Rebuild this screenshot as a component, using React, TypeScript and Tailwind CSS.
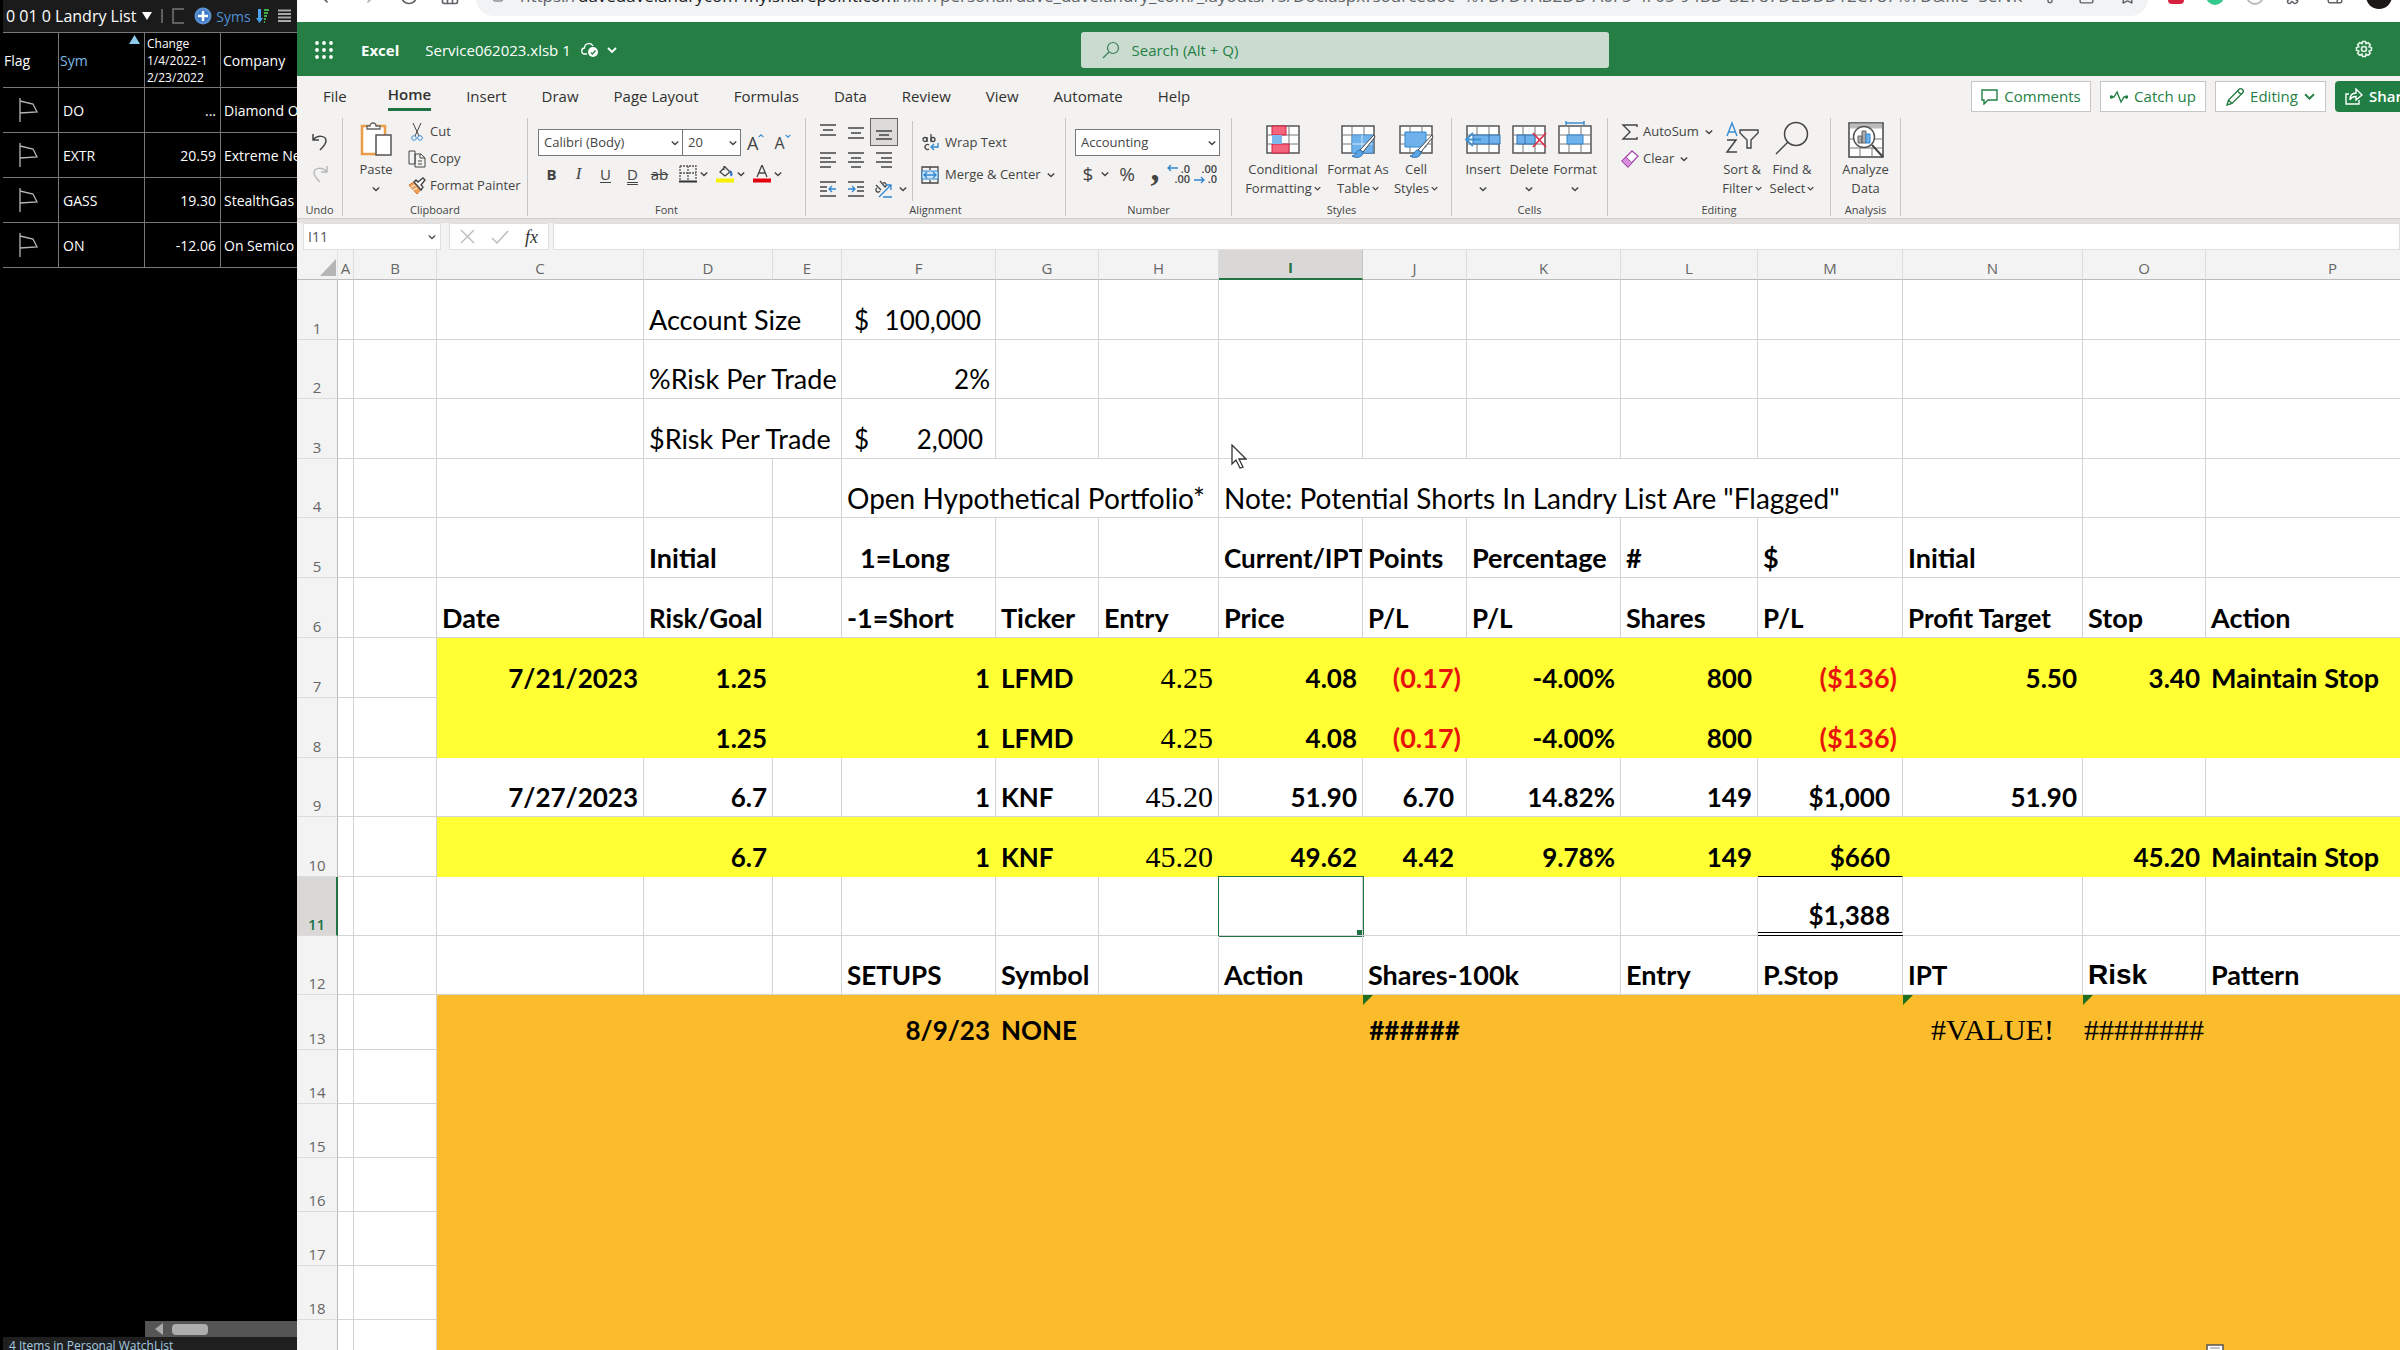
import type { ReactNode } from "react";
import { ArrowLeft, ArrowRight, House, Lock, RotateCw, Share2, Square, Star, PanelRight, Puzzle } from "lucide-react";

type Cell = { col: string; text: string; span?: number; cls?: string; mark?: boolean };
type Row = { n: number; h: string; fill?: "yellow" | "orange"; cells: Cell[] };

const columns = [
    { id: "A", w: "w-[16px]" },
    { id: "B", w: "w-[83px]" },
    { id: "C", w: "w-[207px]" },
    { id: "D", w: "w-[129px]" },
    { id: "E", w: "w-[69px]" },
    { id: "F", w: "w-[154px]" },
    { id: "G", w: "w-[103px]" },
    { id: "H", w: "w-[120px]" },
    { id: "I", w: "w-[144px]" },
    { id: "J", w: "w-[104px]" },
    { id: "K", w: "w-[154px]" },
    { id: "L", w: "w-[137px]" },
    { id: "M", w: "w-[145px]" },
    { id: "N", w: "w-[180px]" },
    { id: "O", w: "w-[123px]" },
    { id: "P", w: "w-[254px]" },
];

const TXT = "text-[27px]";
const NOTE = "text-[28px]";
const B = "font-bold text-[27px]";
const CAPS = "font-bold";
const R = "font-bold text-right";
const ACC = "font-bold text-right pr-[12px]";
const RED = "font-bold text-right text-[27px] text-[#e8140c]";
const SERIF = "text-right font-['Liberation_Serif',serif] text-[30px]";

const rows: Row[] = [
    { n: 1, h: "h-[60px]", cells: [{ col: "D", text: "Account Size", span: 2, cls: TXT }, { col: "F", text: "$|100,000", cls: "pl-[12px] pr-[14px]" }] },
    { n: 2, h: "h-[59px]", cells: [{ col: "D", text: "%Risk Per Trade", span: 2, cls: TXT }, { col: "F", text: "2%", cls: "text-right" }] },
    { n: 3, h: "h-[60px]", cells: [{ col: "D", text: "$Risk Per Trade", span: 2, cls: TXT }, { col: "F", text: "$|2,000", cls: "pl-[12px] pr-[12px]" }] },
    {
        n: 4, h: "h-[59px]",
        cells: [
            { col: "F", text: "Open Hypothetical Portfolio*", span: 3, cls: NOTE },
            { col: "I", text: 'Note: Potential Shorts In Landry List Are "Flagged"', span: 5, cls: NOTE },
        ],
    },
    {
        n: 5, h: "h-[60px]",
        cells: [
            { col: "D", text: "Initial", cls: B },
            { col: "F", text: "1=Long", cls: "font-bold text-[27px] pl-[18px]" },
            { col: "I", text: "Current/IPT", cls: CAPS },
            { col: "J", text: "Points", cls: B },
            { col: "K", text: "Percentage", cls: B },
            { col: "L", text: "#", cls: B },
            { col: "M", text: "$", cls: B },
            { col: "N", text: "Initial", cls: B },
        ],
    },
    {
        n: 6, h: "h-[60px]",
        cells: [
            { col: "C", text: "Date", cls: B },
            { col: "D", text: "Risk/Goal", cls: CAPS },
            { col: "F", text: "-1=Short", cls: B },
            { col: "G", text: "Ticker", cls: B },
            { col: "H", text: "Entry", cls: B },
            { col: "I", text: "Price", cls: B },
            { col: "J", text: "P/L", cls: CAPS },
            { col: "K", text: "P/L", cls: CAPS },
            { col: "L", text: "Shares", cls: B },
            { col: "M", text: "P/L", cls: CAPS },
            { col: "N", text: "Profit Target", cls: CAPS },
            { col: "O", text: "Stop", cls: B },
            { col: "P", text: "Action", cls: B },
        ],
    },
    {
        n: 7, h: "h-[60px]", fill: "yellow",
        cells: [
            { col: "C", text: "7/21/2023", cls: R },
            { col: "D", text: "1.25", cls: R },
            { col: "F", text: "1", cls: R },
            { col: "G", text: "LFMD", cls: CAPS },
            { col: "H", text: "4.25", cls: SERIF },
            { col: "I", text: "4.08", cls: R },
            { col: "J", text: "(0.17)", cls: RED },
            { col: "K", text: "-4.00%", cls: R },
            { col: "L", text: "800", cls: R },
            { col: "M", text: "($136)", cls: RED },
            { col: "N", text: "5.50", cls: R },
            { col: "O", text: "3.40", cls: R },
            { col: "P", text: "Maintain Stop", cls: B },
        ],
    },
    {
        n: 8, h: "h-[60px]", fill: "yellow",
        cells: [
            { col: "D", text: "1.25", cls: R },
            { col: "F", text: "1", cls: R },
            { col: "G", text: "LFMD", cls: CAPS },
            { col: "H", text: "4.25", cls: SERIF },
            { col: "I", text: "4.08", cls: R },
            { col: "J", text: "(0.17)", cls: RED },
            { col: "K", text: "-4.00%", cls: R },
            { col: "L", text: "800", cls: R },
            { col: "M", text: "($136)", cls: RED },
        ],
    },
    {
        n: 9, h: "h-[59px]",
        cells: [
            { col: "C", text: "7/27/2023", cls: R },
            { col: "D", text: "6.7", cls: R },
            { col: "F", text: "1", cls: R },
            { col: "G", text: "KNF", cls: CAPS },
            { col: "H", text: "45.20", cls: SERIF },
            { col: "I", text: "51.90", cls: R },
            { col: "J", text: "6.70", cls: ACC },
            { col: "K", text: "14.82%", cls: R },
            { col: "L", text: "149", cls: R },
            { col: "M", text: "$1,000", cls: ACC },
            { col: "N", text: "51.90", cls: R },
        ],
    },
    {
        n: 10, h: "h-[60px]", fill: "yellow",
        cells: [
            { col: "D", text: "6.7", cls: R },
            { col: "F", text: "1", cls: R },
            { col: "G", text: "KNF", cls: CAPS },
            { col: "H", text: "45.20", cls: SERIF },
            { col: "I", text: "49.62", cls: R },
            { col: "J", text: "4.42", cls: ACC },
            { col: "K", text: "9.78%", cls: R },
            { col: "L", text: "149", cls: R },
            { col: "M", text: "$660", cls: "font-bold text-right pr-[12px] border-b-black" },
            { col: "O", text: "45.20", cls: R },
            { col: "P", text: "Maintain Stop", cls: B },
        ],
    },
    {
        n: 11, h: "h-[59px]",
        cells: [{ col: "M", text: "$1,388", cls: "font-bold text-right pr-[12px] pb-px border-b-4 border-b-black [border-bottom-style:double]" }],
    },
    {
        n: 12, h: "h-[59px]",
        cells: [
            { col: "F", text: "SETUPS", cls: CAPS },
            { col: "G", text: "Symbol", cls: B },
            { col: "I", text: "Action", cls: B },
            { col: "J", text: "Shares-100k", span: 2, cls: B },
            { col: "L", text: "Entry", cls: B },
            { col: "M", text: "P.Stop", cls: B },
            { col: "N", text: "IPT", cls: CAPS },
            { col: "O", text: "Risk", cls: "font-bold font-['Liberation_Sans',sans-serif] text-[28px]" },
            { col: "P", text: "Pattern", cls: B },
        ],
    },
    {
        n: 13, h: "h-[55px]", fill: "orange",
        cells: [
            { col: "F", text: "8/9/23", cls: R },
            { col: "G", text: "NONE", cls: CAPS },
            { col: "J", text: "######", cls: "font-bold text-center", mark: true },
            { col: "N", text: "#VALUE!", cls: "text-center font-['Liberation_Serif',serif] text-[30px]", mark: true },
            { col: "O", text: "########", cls: "px-px font-['Liberation_Serif',serif] text-[30px]", mark: true },
        ],
    },
    { n: 14, h: "h-[54px]", fill: "orange", cells: [] },
    { n: 15, h: "h-[54px]", fill: "orange", cells: [] },
    { n: 16, h: "h-[54px]", fill: "orange", cells: [] },
    { n: 17, h: "h-[54px]", fill: "orange", cells: [] },
    { n: 18, h: "h-[54px]", fill: "orange", cells: [] },
    { n: 19, h: "h-[54px]", fill: "orange", cells: [] },
];

const watchlist = [
    { sym: "DO", change: "...", company: "Diamond O" },
    { sym: "EXTR", change: "20.59", company: "Extreme Ne" },
    { sym: "GASS", change: "19.30", company: "StealthGas" },
    { sym: "ON", change: "-12.06", company: "On Semico" },
];

const tabs = ["Insert", "Draw", "Page Layout", "Formulas", "Data", "Review", "View", "Automate", "Help"];

export default function App() {
    return (
        <div className="flex h-screen overflow-hidden bg-black font-['Open_Sans','Noto_Sans',sans-serif]">
            <Watchlist />
            <main className="flex min-w-0 flex-1 flex-col overflow-hidden bg-white">
                <BrowserBar />
                <TitleBar />
                <Ribbon />
                <FormulaBar />
                <Sheet />
            </main>
        </div>
    );
}

function Watchlist() {
    return (
        <aside className="flex w-[297px] shrink-0 flex-col overflow-hidden bg-black pl-[3px] text-white">
            <div className="flex h-[32px] shrink-0 items-center bg-[#1b1b1b] pl-[3px]">
                <button className="flex items-center gap-1.5 whitespace-nowrap text-[16px]">
                    0 01 0 Landry List
                    <svg width="10" height="8" viewBox="0 0 10 8"><path d="M0 0h10L5 8z" fill="#fff" /></svg>
                </button>
                <svg className="ml-2 shrink-0" width="26" height="18" viewBox="0 0 26 18" fill="none" stroke="#777" strokeWidth="1.5">
                    <path d="M2 2v14M24 2H13v14h11" />
                </svg>
                <button className="ml-2 flex items-center gap-1 text-[14px] text-[#4f8fd6]">
                    <svg width="18" height="18" viewBox="0 0 18 18">
                        <circle cx="9" cy="9" r="8.5" fill="#5b8fd0" />
                        <circle cx="9" cy="9" r="6" fill="#3b78c8" />
                        <path d="M9 4v10M4 9h10" stroke="#fff" strokeWidth="2.5" />
                    </svg>
                    Syms
                </button>
                <svg className="ml-1 shrink-0" width="15" height="16" viewBox="0 0 15 16">
                    <path d="M3 1h3v9h2l-3.5 5L1 10h2z" fill="#4aa3f0" />
                    <path d="M9 2h5M9 5h4M9 8h3M9 11h2M9 14h1" stroke="#3fae49" strokeWidth="2" />
                </svg>
                <svg className="ml-2 shrink-0" width="13" height="14" viewBox="0 0 13 14">
                    <path d="M0 1.5h13M0 5h13M0 8.5h13M0 12h13" stroke="#aaa" strokeWidth="2" />
                </svg>
            </div>
            <table className="w-full shrink-0 table-fixed border-separate border-spacing-0 text-[14px]">
                <colgroup>
                    <col className="w-[56px]" />
                    <col className="w-[86px]" />
                    <col className="w-[76px]" />
                    <col />
                </colgroup>
                <thead>
                    <tr className="h-[56px] text-left">
                        <th className="border-y border-r border-[#777] pl-px font-normal">Flag</th>
                        <th className="relative border-y border-r border-[#777] pl-px font-normal text-[#7dbbe6]">
                            Sym
                            <svg className="absolute top-0.5 right-1" width="11" height="9" viewBox="0 0 11 9"><path d="M0 9L5.5 0 11 9z" fill="#8ccbec" /></svg>
                        </th>
                        <th className="border-y border-r border-[#777] pl-0.5 text-[12px] leading-[17px] font-normal">
                            Change<br />1/4/2022-1<br />2/23/2022
                        </th>
                        <th className="border-y border-[#777] pl-0.5 font-normal">Company</th>
                    </tr>
                </thead>
                <tbody>
                    {watchlist.map((item) => (
                        <tr key={item.sym} className="h-[45px] whitespace-nowrap">
                            <td className="border-r border-b border-[#777] pl-[15px]">
                                <svg width="22" height="26" viewBox="0 0 22 26" fill="none" stroke="#b5b5b5" strokeWidth="1.3">
                                    <path d="M2 1v24M2 4l13 3 4 8-17 1" />
                                </svg>
                            </td>
                            <td className="border-r border-b border-[#777] pl-1">{item.sym}</td>
                            <td className="border-r border-b border-[#777] pr-1 text-right">{item.change}</td>
                            <td className="overflow-hidden border-b border-[#777] pl-[3px]">{item.company}</td>
                        </tr>
                    ))}
                </tbody>
            </table>
            <div className="mt-auto ml-[142px] flex h-[16px] shrink-0 items-center bg-[#555] pl-[10px]">
                <svg width="8" height="12" viewBox="0 0 8 12"><path d="M8 0v12L0 6z" fill="#aaa" /></svg>
                <div className="ml-[9px] h-[11px] w-[36px] rounded-sm bg-[#adadad]" />
            </div>
            <div className="h-[13px] shrink-0 overflow-hidden bg-[#1f1f1f] pl-1.5 text-[12px] leading-[17px] text-[#a5cbe0]">
                4 Items in Personal WatchList
            </div>
        </aside>
    );
}

function BrowserBar() {
    return (
        <div className="flex h-[22px] shrink-0 items-end overflow-hidden bg-white pb-[6px] text-[#5f6368]">
            <div className="flex h-9 w-[179px] shrink-0 items-center gap-[21px] pb-1 pl-[20px]">
                <ArrowLeft size={20} />
                <ArrowRight size={20} className="text-[#b0b3b6]" />
                <RotateCw size={20} />
                <House size={20} />
            </div>
            <div className="flex h-9 min-w-0 flex-1 items-center gap-4 rounded-full bg-[#f1f3f4] pr-3 pb-1 pl-4">
                <Lock size={12} className="shrink-0" />
                <span className="min-w-0 flex-1 overflow-hidden text-[17px] leading-7 whitespace-nowrap">
                    https://<span className="text-[#202124]">davedavelandrycom-my.sharepoint.com</span>
                    /:x:/r/personal/dave_davelandry_com/_layouts/15/Doc.aspx?sourcedoc=%7B7D7AB2DD-A0F5-4F05-94BD-B2787DEDDD12C787%7D&amp;file=Service062023...
                </span>
                <div className="flex shrink-0 items-center gap-6">
                    <Share2 size={16} />
                    <Square size={17} />
                    <Star size={17} />
                </div>
            </div>
            <div className="flex h-9 w-[252px] shrink-0 items-center gap-[22px] pb-1 pl-[20px]">
                <span className="size-[16px] rounded-sm bg-[#d5213f]" />
                <span className="size-[18px] rounded-full bg-[#35c98e]" />
                <span className="size-[18px] rounded-full border-2 border-[#bbb]" />
                <Puzzle size={18} />
                <PanelRight size={18} />
                <span className="size-[26px] rounded-full bg-[#1c1818]" />
            </div>
        </div>
    );
}

function TitleBar() {
    return (
        <header className="flex h-[54px] shrink-0 items-center bg-[#257f45] pt-0.5 pr-2 text-[15px] text-white">
            <div className="flex flex-1 items-center pl-[18px]">
                <button aria-label="App launcher">
                    <svg width="18" height="18" viewBox="0 0 18 18" fill="#fff">
                        {[2, 9, 16].map((y) => [2, 9, 16].map((x) => <circle key={`${x}-${y}`} cx={x} cy={y} r="1.9" />))}
                    </svg>
                </button>
                <span className="ml-7 font-bold">Excel</span>
                <button className="ml-[26px] flex items-center">
                    Service062023.xlsb 1
                    <svg className="ml-2.5" width="18" height="16" viewBox="0 0 18 16" fill="none" stroke="#fff" strokeWidth="1.3">
                        <path d="M6 12H4a3 3 0 0 1-.5-6A4.5 4.5 0 0 1 12 4" />
                        <circle cx="12" cy="10" r="5" fill="#fff" stroke="none" />
                        <path d="M10 10.5l1.5 1.5 3-3.5" stroke="#257f45" />
                    </svg>
                    <Chevron size={10} className="ml-2" />
                </button>
            </div>
            <label className="flex h-[36px] w-[528px] items-center rounded-[3px] bg-[#cadcd0] pl-[21px] text-[#257f45]">
                <svg className="shrink-0" width="18" height="18" viewBox="0 0 18 18" fill="none" stroke="#3b7f54" strokeWidth="1.2">
                    <circle cx="11" cy="7" r="5.5" />
                    <path d="M7 11l-6 6" />
                </svg>
                <input className="ml-3 w-full bg-transparent outline-none placeholder:text-[#257f45]" aria-label="Search" placeholder="Search (Alt + Q)" />
            </label>
            <div className="flex flex-1 justify-end pr-[18px]">
                <button aria-label="Settings">
                    <svg width="20" height="20" viewBox="0 0 20 20" fill="none" stroke="#e6f5ea" strokeWidth="1.6">
                        <path d="M8.6 1.5h2.8l.6 2.2 2.2-1.1 2 2-1.1 2.2 2.3.7v2.8l-2.3.8 1.1 2.2-2 2-2.2-1.1-.6 2.3H8.6l-.7-2.3-2.2 1.1-2-2 1.1-2.2-2.3-.8V7.500l2.3-.7-1.1-2.200 2-2 2.200 1.100z" />
                        <circle cx="10" cy="9" r="2.5" />
                    </svg>
                </button>
            </div>
        </header>
    );
}

function Ribbon() {
    return (
        <div className="shrink-0 border-b-4 border-[#e4e2e1] bg-[#f3f2f1] text-[#444]">
            <div className="flex h-[40px] text-[15px] text-[#323130]">
                <nav className="flex gap-[35px] pl-[26px]">
                    <button className="h-[35px] pt-1 pr-[6px] leading-[26px]">File</button>
                    <button className="h-[35px] border-b-[3px] border-[#217346] pt-1 leading-[26px] font-semibold">Home</button>
                    {tabs.map((tab) => (
                        <button key={tab} className="h-[35px] pt-1 leading-[26px] whitespace-nowrap">{tab}</button>
                    ))}
                </nav>
                <div className="-mr-[25px] ml-auto flex shrink-0 gap-[9px] pt-[5px] text-[#257f45]">
                    <button className="flex h-[31px] w-[120px] items-center justify-center gap-1.5 border border-[#c8c6c4] bg-white">
                        <svg width="17" height="16" viewBox="0 0 17 16" fill="none" stroke="currentColor" strokeWidth="1.4"><path d="M1 1h15v10H7l-4 4v-4H1z" /></svg>
                        Comments
                    </button>
                    <button className="flex h-[31px] w-[106px] items-center justify-center gap-1.5 border border-[#c8c6c4] bg-white">
                        <svg width="18" height="14" viewBox="0 0 18 14" fill="none" stroke="currentColor" strokeWidth="1.4">
                            <path d="M1 7h3l3-5 4 10 3-5h3" />
                            <circle cx="1.5" cy="7" r="1" fill="currentColor" />
                            <circle cx="16.5" cy="7" r="1" fill="currentColor" />
                        </svg>
                        Catch up
                    </button>
                    <button className="flex h-[31px] w-[111px] items-center justify-center gap-1.5 border border-[#c8c6c4] bg-white">
                        <svg width="18" height="18" viewBox="0 0 18 18" fill="none" stroke="currentColor" strokeWidth="1.4"><path d="M1 17l1.5-5L13 1.500a2 2 0 0 1 3.500 3.500L6 15.500zM11.500 3l3.500 3.500M2.500 12L6 15.500" /></svg>
                        Editing
                        <Chevron size={11} />
                    </button>
                    <button className="flex h-[31px] w-[90px] items-center gap-1.5 rounded-sm bg-[#217f43] pl-2.5 font-semibold text-white">
                        <svg width="18" height="17" viewBox="0 0 18 17" fill="none" stroke="currentColor" strokeWidth="1.4"><path d="M4 6H1v10h13v-4M5 12c0-5 3-7 6-7V1l6 6-6 5V8.500c-3 0-5 1-6 3.500z" /></svg>
                        Share
                    </button>
                </div>
            </div>
            <div className="flex h-[103px] border-b border-[#cfcdcb] py-[2px] text-[13px]">
                <Group label="Undo" width="w-[46px]">
                    <div className="flex w-full flex-col items-center gap-[14px] pt-[15px]">
                        <button aria-label="Undo">
                            <svg width="18" height="18" viewBox="0 0 18 18" fill="none" stroke="#444" strokeWidth="1.5"><path d="M2 1v6h6M2 7c4-5 13-5 13 1 0 3-2 5-6 9" /></svg>
                        </button>
                        <button aria-label="Redo">
                            <svg width="18" height="18" viewBox="0 0 18 18" fill="none" stroke="#bbb" strokeWidth="1.5"><path d="M16 1v6h-6M16 7C12 2 3 2 3 8c0 3 2 5 6 9" /></svg>
                        </button>
                    </div>
                </Group>
                <Group label="Clipboard" width="w-[185px]">
                    <div className="pl-[10px]">
                        <BigButton width="w-[46px]" lines={["Paste"]} below icon={
                            <>
                                <path d="M4 4h23v28H4z" fill="#fff" stroke="#eb9d4a" strokeWidth="2.5" />
                                <path d="M9 7V4h3c0-4 6-4 6 0h4v3z" fill="#fff" stroke="#666" strokeWidth="1.3" />
                                <path d="M18 13h15v20H18z" fill="#fff" stroke="#555" strokeWidth="1.5" />
                            </>
                        } />
                    </div>
                    <div className="ml-[9px]">
                        <SmallButton label="Cut" icon={
                            <>
                                <path d="M5 0l6 13M13 0L7 13" stroke="#444" />
                                <circle cx="6" cy="15" r="2.3" stroke="#3b8fd4" />
                                <circle cx="12" cy="15" r="2.3" stroke="#3b8fd4" />
                            </>
                        } />
                        <SmallButton label="Copy" icon={<path d="M7 14H1V1h6v13M7 4h6l4 4v9H7zM12 4v4h5M10 11h4M10 14h4" stroke="#444" />} />
                        <SmallButton label="Format Painter" icon={
                            <>
                                <path d="M1 8l8 9 4-5-7-7z" fill="#f4a35c" stroke="#d9772b" />
                                <path d="M3 10l4-2M5 13l4-2" stroke="#fff" />
                                <path d="M6 5l2-2 2 2 5-4 2 2-4 5 2 2-2 3z" fill="#fff" stroke="#444" strokeWidth="1.4" />
                            </>
                        } />
                    </div>
                </Group>
                <Group label="Font" width="w-[278px]">
                    <div className="pt-[11px] pl-[10px]">
                        <div className="flex items-center">
                            <DropDown label="Font name" value="Calibri (Body)" width="w-[145px]" />
                            <DropDown label="Font size" value="20" width="w-[58px]" joined />
                            <button className="ml-1.5 flex text-[18px] leading-6">A<Chevron size={6} up className="mt-0.5 text-[#3b8fd4]" /></button>
                            <button className="ml-2.5 flex text-[16px] leading-6">A<Chevron size={6} className="mt-0.5 text-[#3b8fd4]" /></button>
                        </div>
                        <div className="mt-2 flex h-[20px] items-center text-[15px]">
                            <button className="w-[27px] font-bold">B</button>
                            <button className="w-[27px] font-['Liberation_Serif',serif] text-[17px] italic">I</button>
                            <button className="w-[27px] underline underline-offset-2">U</button>
                            <button className="w-[27px] underline decoration-double underline-offset-2">D</button>
                            <button className="w-[27px] line-through">ab</button>
                            <IconMenu label="Borders" className="ml-[6px]">
                                <path d="M1 1h16v14M1 1v14M9 1v15M1 8h16" stroke="#555" strokeDasharray="2 1" />
                                <path d="M0 16.500h18" stroke="#333" strokeWidth="2" />
                            </IconMenu>
                            <IconMenu label="Fill color" className="ml-2">
                                <path d="M8 1v4M4 7l5-5 5 5-5 4z" stroke="#444" />
                                <path d="M14 6c2 2 2 3 1 5" stroke="#2b6fc0" strokeWidth="2" />
                                <path d="M0 15.500h18" stroke="#f9f000" strokeWidth="4" />
                            </IconMenu>
                            <IconMenu label="Font color" className="ml-2">
                                <path d="M4 12L9 0l5 12M6 8h6" stroke="#444" />
                                <path d="M0 15.500h18" stroke="#e3000f" strokeWidth="4" />
                            </IconMenu>
                        </div>
                    </div>
                </Group>
                <Group label="Alignment" width="w-[260px]">
                    <div className="grid grid-cols-3 grid-rows-3 pl-[8px]">
                        <AlignButton label="Top align" d="M1 2h16M4 7h10M1 12h16" />
                        <AlignButton label="Middle align" d="M1 5h16M4 10h10M1 15h16" />
                        <AlignButton label="Bottom align" d="M1 8h16M4 12h10M1 16h16" active />
                        <AlignButton label="Align left" d="M1 2h16M1 7h11M1 11h16M1 16h11" />
                        <AlignButton label="Center" d="M1 2h16M4 7h10M1 11h16M4 16h10" />
                        <AlignButton label="Align right" d="M1 2h16M6 7h11M1 11h16M6 16h11" />
                        <AlignButton label="Decrease indent" d="M1 2h16M1 7h7M1 11h7M1 16h16" accent="M17 9h-6M13 6l-3 3 3 3" />
                        <AlignButton label="Increase indent" d="M1 2h16M10 7h7M10 11h7M1 16h16" accent="M1 9h6M5 6l3 3-3 3" />
                        <AlignButton label="Orientation" d="M2 8a2.200 2.200 0 1 0 3 3M1 5l5 5M5 1l5 6a2.200 2.200 0 1 0-2-4" accent="M4 17L16 5M11 5h5v5M8 17h9" />
                    </div>
                    <Chevron size={8} className="mb-[10px] ml-px self-end" />
                    <div className="mt-[3px] ml-[5px] h-[80px] border-l border-[#c8c6c4]" />
                    <div className="flex flex-col pt-[9px] pl-[8px]">
                        <button className="flex h-[32px] items-center gap-1.5 whitespace-nowrap">
                            <svg width="18" height="18" viewBox="0 0 18 18" fill="none" stroke="#444" strokeWidth="1.3">
                                <circle cx="4" cy="5.5" r="2" /><path d="M6 3v5M10 0v8M8 11a2.500 2.500 0 1 0 0 4" /><circle cx="12" cy="5.5" r="2" />
                                <path d="M17 9v4h-6M13 10l-3 3 3 3" stroke="#2f86d0" />
                            </svg>
                            Wrap Text
                        </button>
                        <button className="flex h-[32px] items-center gap-1.5 whitespace-nowrap">
                            <svg width="18" height="18" viewBox="0 0 18 18" fill="none">
                                <path d="M1 1h16v16H1zM9 1v3M9 14v3" stroke="#444" strokeWidth="1.3" />
                                <path d="M1 5h16v8H1z" fill="#cfe6fa" stroke="#2f86d0" />
                                <path d="M3 9h12M6 6L3 9l3 3M12 6l3 3-3 3" stroke="#2f86d0" strokeWidth="1.3" />
                            </svg>
                            Merge &amp; Center
                            <Chevron size={8} />
                        </button>
                    </div>
                </Group>
                <Group label="Number" width="w-[166px]">
                    <div className="pt-[11px] pl-[9px]">
                        <DropDown label="Number format" value="Accounting" width="w-[145px]" />
                        <div className="mt-2 flex h-[20px] items-center text-[19px]">
                            <button className="w-[26px]">$</button>
                            <button className="flex w-[10px]" aria-label="Accounting formats"><Chevron size={8} /></button>
                            <button className="w-[32px]">%</button>
                            <button className="w-[24px] pb-3 font-['Liberation_Serif',serif] text-[36px] leading-5 font-bold">,</button>
                            <button className="relative w-[27px] text-right text-[11px] leading-[10px] font-semibold">
                                <svg className="absolute top-0 left-0" width="11" height="8" viewBox="0 0 11 8" fill="none" stroke="#2f86d0" strokeWidth="1.3"><path d="M11 4H1M4 1L1 4l3 3" /></svg>
                                <span className="block pr-1">.0</span><span className="block pr-1">.00</span>
                            </button>
                            <button className="relative w-[27px] text-right text-[11px] leading-[10px] font-semibold">
                                <svg className="absolute bottom-0 left-0" width="11" height="8" viewBox="0 0 11 8" fill="none" stroke="#2f86d0" strokeWidth="1.3"><path d="M0 4h10M7 1l3 3-3 3" /></svg>
                                <span className="block pr-1">.00</span><span className="block pr-1">.0</span>
                            </button>
                        </div>
                    </div>
                </Group>
                <Group label="Styles" width="w-[220px]">
                    <div className="flex pl-[10px]">
                        <BigButton width="w-[82px]" lines={["Conditional", "Formatting"]} menu icon={
                            <>
                                <GridLines />
                                <path d="M7 4h14v9H7zM7 22h17v9H7z" fill="#f4647c" stroke="#d0203c" />
                                <path d="M7 13h10v9H7z" fill="#7db9ec" />
                            </>
                        } />
                        <BigButton width="w-[68px]" lines={["Format As", "Table"]} menu icon={
                            <>
                                <GridLines />
                                <path d="M12 13h21v18H12z" fill="#6fb1ea" stroke="#4a97db" />
                                <path d="M12 22h21M22 13v18" stroke="#cfe6fa" />
                                <Brush />
                            </>
                        } />
                        <BigButton width="w-[48px]" lines={["Cell", "Styles"]} menu icon={
                            <>
                                <GridLines />
                                <path d="M7 10h21v15H7z" fill="#6fb1ea" stroke="#2f86d0" />
                                <Brush />
                            </>
                        } />
                    </div>
                </Group>
                <Group label="Cells" width="w-[156px]">
                    <div className="flex pl-2">
                        <BigButton width="w-[46px]" lines={["Insert"]} below icon={
                            <>
                                <GridLines />
                                <path d="M8 13h27v9H8z" fill="#6fb1ea" stroke="#2f6fae" />
                                <path d="M24 13v9" stroke="#2f6fae" />
                                <path d="M16 17.500H1M8 11l-7 6.500L8 24" stroke="#3b8fd4" strokeWidth="1.8" />
                            </>
                        } />
                        <BigButton width="w-[46px]" lines={["Delete"]} below icon={
                            <>
                                <GridLines />
                                <path d="M6 13h18v9H6z" fill="#6fb1ea" stroke="#2f6fae" />
                                <path d="M14 13v9" stroke="#2f6fae" />
                                <path d="M22 11l13 14M35 11L22 25" stroke="#e0304a" strokeWidth="1.8" />
                            </>
                        } />
                        <BigButton width="w-[46px]" lines={["Format"]} below icon={
                            <>
                                <GridLines />
                                <path d="M10 13h16v9H10z" fill="#6fb1ea" stroke="#2f86d0" />
                                <path d="M9 1h18M9-1v4M27-1v4" stroke="#3b8fd4" strokeWidth="1.5" />
                            </>
                        } />
                    </div>
                </Group>
                <Group label="Editing" width="w-[223px]">
                    <div className="ml-[13px] w-[96px] shrink-0">
                        <SmallButton label="AutoSum" menu icon={<path d="M16 4V2H2l7 7-7 7h14v-2" stroke="#444" strokeWidth="1.4" />} />
                        <SmallButton label="Clear" menu icon={
                            <>
                                <path d="M1 11L11 1l6 5L7 17z" fill="#fff" stroke="#a64dab" strokeWidth="1.3" />
                                <path d="M1 11l4-4 6 6-4 4z" fill="#d98ddd" stroke="#a64dab" />
                            </>
                        } />
                    </div>
                    <BigButton width="w-[50px]" lines={["Sort &", "Filter"]} menu icon={
                        <>
                            <path d="M3 14L8 1l5 13M5 10h6" stroke="#3b8fd4" strokeWidth="1.5" />
                            <path d="M3 18h9L3 30h10" stroke="#444" strokeWidth="1.5" />
                            <path d="M16 8h18v3l-7 7v8h-4v-8l-7-7z" stroke="#444" strokeWidth="1.4" />
                        </>
                    } />
                    <BigButton width="w-[50px]" lines={["Find &", "Select"]} menu icon={
                        <>
                            <circle cx="22" cy="12" r="11.5" stroke="#444" strokeWidth="1.5" />
                            <path d="M14 20L2 32" stroke="#444" strokeWidth="1.5" />
                        </>
                    } />
                </Group>
                <Group label="Analysis" width="w-[70px]">
                    <BigButton width="w-[69px]" lines={["Analyze", "Data"]} icon={
                        <>
                            <path d="M1 1h34v34H1z" fill="#fff" stroke="#444" strokeWidth="1.5" />
                            <path d="M2 4h32" stroke="#bbb" strokeWidth="5" />
                            <path d="M1 17h34M1 26h34M12 26v9M24 26v9" stroke="#777" />
                            <circle cx="16" cy="15" r="10.5" fill="#fff" stroke="#555" strokeWidth="1.5" />
                            <path d="M24 23l11 12" stroke="#444" strokeWidth="2" />
                            <path d="M10 14h4v7h-4zM14 9h4v12h-4z" fill="#aaa" stroke="#666" />
                            <path d="M18 12h4v9h-4z" fill="#6fb1ea" stroke="#2f86d0" />
                        </>
                    } />
                </Group>
            </div>
        </div>
    );
}

function Group({ label, width, children }: { label: string; width: string; children: ReactNode }) {
    return (
        <section aria-label={label} className={`flex shrink-0 flex-col border-r border-[#c8c6c4] ${width}`}>
            <div className="flex min-h-0 flex-1">{children}</div>
            <div className="text-center text-[11px] leading-[13px]">{label}</div>
        </section>
    );
}

function BigButton({ width, lines, icon, menu, below }: { width: string; lines: string[]; icon: ReactNode; menu?: boolean; below?: boolean }) {
    return (
        <button className={`flex shrink-0 flex-col items-center self-start pt-1 leading-[19px] whitespace-nowrap ${width}`}>
            <svg className="mb-[2px] overflow-visible" width="36" height="36" viewBox="0 0 36 36" fill="none">{icon}</svg>
            {lines.map((line, i) => (
                <span key={line} className="flex items-center gap-0.5">
                    {line}
                    {menu && i === lines.length - 1 && <Chevron size={7} />}
                </span>
            ))}
            {below && <Chevron size={8} className="mt-1.5" />}
        </button>
    );
}

function SmallButton({ label, icon, menu }: { label: string; icon: ReactNode; menu?: boolean }) {
    return (
        <button className="flex h-[27px] items-center whitespace-nowrap">
            <svg className="mr-1" width="18" height="18" viewBox="0 0 18 18" fill="none">{icon}</svg>
            {label}
            {menu && <Chevron size={8} className="ml-1.5" />}
        </button>
    );
}

function IconMenu({ label, className, children }: { label: string; className: string; children: ReactNode }) {
    return (
        <button aria-label={label} className={`flex items-center gap-[3px] ${className}`}>
            <svg width="18" height="18" viewBox="0 0 18 18" fill="none" strokeWidth="1.3">{children}</svg>
            <Chevron size={8} />
        </button>
    );
}

function AlignButton({ label, d, accent, active }: { label: string; d: string; accent?: string; active?: boolean }) {
    return (
        <button aria-label={label} className={`flex size-[28px] items-center justify-center border ${active ? "border-[#666] bg-[#dddbda]" : "border-transparent"}`}>
            <svg width="18" height="18" viewBox="0 0 18 18" fill="none" strokeWidth="1.3">
                <path d={d} stroke="#444" />
                {accent && <path d={accent} stroke="#2f86d0" />}
            </svg>
        </button>
    );
}

function DropDown({ label, value, width, joined }: { label: string; value: string; width: string; joined?: boolean }) {
    return (
        <div className={`relative ${width}`}>
            <select
                aria-label={label}
                className={`h-[27px] w-full appearance-none border border-[#777] bg-white pl-[5px] text-[13px] ${joined ? "border-l-0" : ""}`}
            >
                <option>{value}</option>
            </select>
            <Chevron size={8} className="pointer-events-none absolute top-[10px] right-[4px]" />
        </div>
    );
}

function Chevron({ size, up, className = "" }: { size: number; up?: boolean; className?: string }) {
    return (
        <svg className={`shrink-0 ${className}`} width={size} height={size} viewBox="0 0 10 10" fill="none" stroke="currentColor" strokeWidth="1.8">
            <path d={up ? "M1 7l4-4 4 4" : "M1 3l4 4 4-4"} />
        </svg>
    );
}

function GridLines() {
    return (
        <>
            <path d="M2 4h32v27H2z" fill="#fff" stroke="#555" strokeWidth="1.5" />
            <path d="M2 13h32M2 22h32M12 4v27M24 4v27" stroke="#777" />
        </>
    );
}

function Brush() {
    return (
        <>
            <path d="M34 13L20 28l3 2 12-15z" fill="#fff" stroke="#444" />
            <path d="M20 28c-4 0-3 5-8 6 5 3 11 1 11-4z" fill="#5aa5e6" stroke="#2f6fae" />
        </>
    );
}

function FormulaBar() {
    return (
        <div className="flex h-[27px] shrink-0 items-stretch bg-[#f3f3f3] pl-[6px] text-[#555]">
            <label className="flex w-[138px] items-center border border-[#e1dfdd] bg-white pr-1 pl-1">
                <input aria-label="Name box" className="w-full min-w-0 text-[14px] outline-none" defaultValue="I11" />
                <Chevron size={8} />
            </label>
            <div className="ml-[8px] flex w-[100px] items-center justify-between border border-[#e1dfdd] bg-white px-2.5">
                <button aria-label="Cancel">
                    <svg width="15" height="15" viewBox="0 0 15 15" stroke="#bbb" strokeWidth="1.4"><path d="M1 1l13 13M14 1L1 14" /></svg>
                </button>
                <button aria-label="Enter">
                    <svg width="18" height="14" viewBox="0 0 18 14" fill="none" stroke="#bbb" strokeWidth="1.4"><path d="M1 8l5 5L17 1" /></svg>
                </button>
                <button className="font-['Liberation_Serif',serif] text-[18px] leading-5 text-[#333] italic">fx</button>
            </div>
            <input aria-label="Formula" className="ml-[4px] min-w-0 flex-1 border border-[#e1dfdd] bg-white px-2 outline-none" />
        </div>
    );
}

function Sheet() {
    return (
        <div className="relative min-h-0 flex-1 overflow-hidden">
            <table className="w-full min-w-[2163px] table-fixed border-separate border-spacing-0 font-['Lato','Open_Sans',sans-serif] text-[26px] leading-8 text-black">
                <colgroup>
                    <col className="w-[41px]" />
                    {columns.map((c) => <col key={c.id} className={c.w} />)}
                </colgroup>
                <thead>
                    <tr className="h-[30px] bg-[#f3f3f3] font-['Open_Sans',sans-serif] text-[15px] leading-[20px] text-[#666]">
                        <th className="border-r border-b border-[#bbb] border-r-[#e3e3e3] align-bottom">
                            <svg className="mb-[3px] ml-auto" width="17" height="17" viewBox="0 0 17 17"><path d="M16 0v17H0z" fill="#b5b5b5" /></svg>
                        </th>
                        {columns.map((c) => (
                            <th
                                key={c.id}
                                className={c.id === "I"
                                    ? "border-r border-b-2 border-r-[#c5c5c5] border-b-[#217346] bg-[#d9d8d7] pt-1.5 align-middle font-bold text-[#217346]"
                                    : "border-r border-b border-[#bbb] border-r-[#dcdcdc] pt-1.5 align-middle font-normal"}
                            >
                                {c.id}
                            </th>
                        ))}
                    </tr>
                </thead>
                <tbody>
                    {rows.map((row) => <SheetRow key={row.n} row={row} />)}
                </tbody>
            </table>
            <svg className="absolute top-[194px] left-[934px]" width="16" height="25" viewBox="0 0 16 25">
                <path d="M1 1v19l4-4 4 8 3-1-4-8h7z" fill="#fff" stroke="#333" strokeWidth="1.3" />
            </svg>
            <svg className="absolute bottom-0 left-[1909px]" width="18" height="6" viewBox="0 0 18 6">
                <path d="M1 6V1h16v5" fill="#fff" stroke="#555" strokeWidth="1.5" />
                <path d="M4 4h10" stroke="#888" />
            </svg>
        </div>
    );
}

function SheetRow({ row }: { row: Row }) {
    const tds: ReactNode[] = [];
    for (let i = 0; i < columns.length; i++) {
        const id = columns[i].id;
        const cell = row.cells.find((c) => c.col === id);
        const fill = i < 2 ? undefined : row.fill;
        const tone =
            fill === "yellow" ? "bg-[#ffff33] border-[#ffff33]"
            : fill === "orange" ? "bg-[#fabc2a] border-[#fabc2a]"
            : row.n === 11 && id === "I" ? "border-[#d4d4d4] outline-1 outline-[#217346]"
            : "border-[#d4d4d4]";
        tds.push(
            <td
                key={id}
                colSpan={cell?.span}
                className={`relative overflow-hidden border-r border-b px-[5px] pb-[3px] align-bottom whitespace-nowrap ${tone} ${cell?.cls ?? ""}`}
            >
                {cell && <CellText text={cell.text} />}
                {cell?.mark && (
                    <svg className="absolute top-0 left-0" width="10" height="10" viewBox="0 0 10 10"><path d="M0 0h10L0 10z" fill="#1e7020" /></svg>
                )}
                {row.n === 11 && id === "I" && <span className="absolute right-0 bottom-0 size-[5px] bg-[#217346]" />}
            </td>
        );
        if (cell?.span) i += cell.span - 1;
    }
    return (
        <tr className={row.h}>
            <th
                scope="row"
                className={row.n === 11
                    ? "border-r-2 border-b border-r-[#217346] border-b-[#dcdcdc] bg-[#d9d8d7] pb-px align-bottom font-['Open_Sans',sans-serif] text-[15px] leading-5 font-semibold text-[#217346]"
                    : "border-r border-b border-[#dcdcdc] border-r-[#bbb] bg-[#f3f3f3] pb-px align-bottom font-['Open_Sans',sans-serif] text-[15px] leading-5 font-normal text-[#666]"}
            >
                {row.n}
            </th>
            {tds}
        </tr>
    );
}

// A "|" separates the currency sign from the amount in accounting cells.
function CellText({ text }: { text: string }) {
    if (!text.includes("|")) return <>{text}</>;
    const [sign, amount] = text.split("|");
    return (
        <div className="flex justify-between">
            <span>{sign}</span>
            <span>{amount}</span>
        </div>
    );
}
